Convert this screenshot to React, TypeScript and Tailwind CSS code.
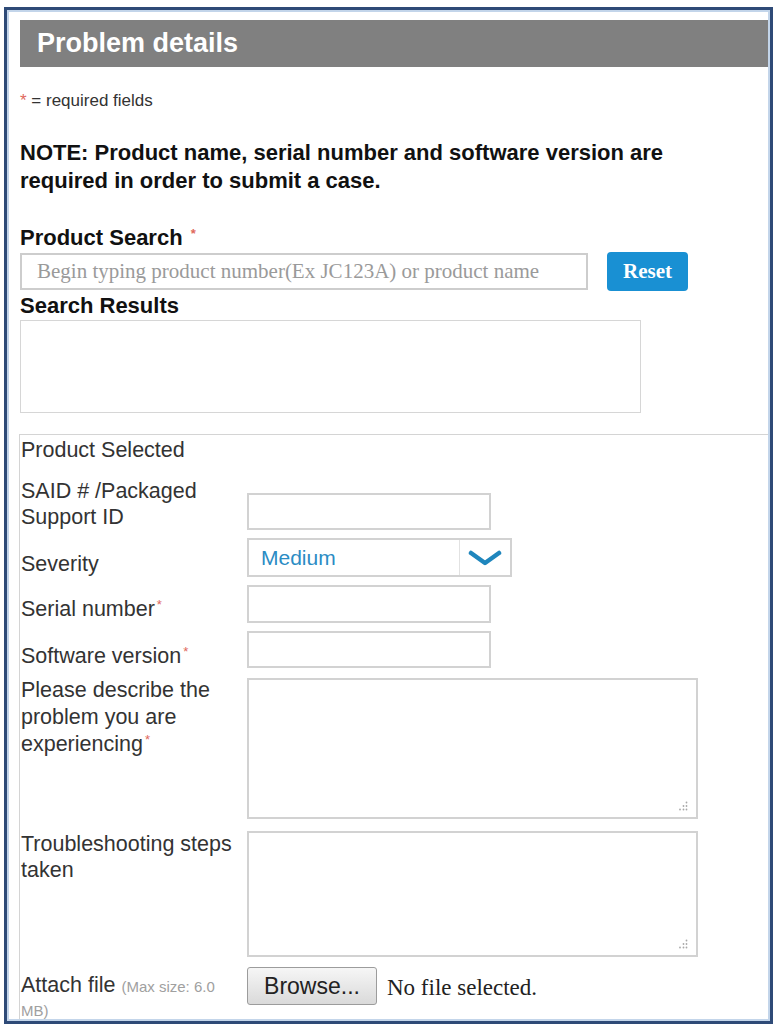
import React from "react";

const sans = "font-['Liberation_Sans',Arial,sans-serif]";
const serif = "font-['Liberation_Serif','Times_New_Roman',serif]";

function Req() {
  return <span className="inline-block relative -top-[7px] text-[#e0685c] text-[13px] leading-none ml-[2px]">*</span>;
}

function Grip() {
  return (
    <svg width="10" height="10" viewBox="0 0 10 10" className="absolute right-[8px] bottom-[6px]">
      <g fill="#a8a8a8">
        <circle cx="8.5" cy="1.5" r="0.9" />
        <circle cx="5.5" cy="5" r="0.9" />
        <circle cx="8.5" cy="5" r="0.9" />
        <circle cx="2" cy="8.5" r="0.9" />
        <circle cx="5.5" cy="8.5" r="0.9" />
        <circle cx="8.5" cy="8.5" r="0.9" />
      </g>
    </svg>
  );
}

function TextBox({ className = "" }: { className?: string }) {
  return <div className={`border-2 border-[#d2d2d2] bg-white ${className}`} />;
}

export default function App() {
  return (
    <div className={`min-h-[1026px] bg-white pt-[7px] pl-[4px] ${sans}`}>
      <div className="w-[769px] h-[1017px] border-[3px] border-[#2e4a77]">
        <div className="h-full border-2 border-[#c3d5ea] pt-[8px] pl-[11px] overflow-hidden">
          {/* Header */}
          <div className="h-[47px] bg-[#808080] flex items-center pl-[17px]">
            <span className="text-white font-bold text-[27px] leading-none">Problem details</span>
          </div>

          <div className="mt-[23px] text-[17px] leading-[22px] text-[#333]">
            <span className="text-[#e0685c]">*</span> = required fields
          </div>

          <p className="mt-[27px] max-w-[700px] font-bold text-[22px] leading-[28px] text-[#111]">
            NOTE: Product name, serial number and software version are required in order to submit a case.
          </p>

          {/* Product search */}
          <div className="mt-[30px] font-bold text-[22px] leading-[26px] text-[#111]">
            Product Search <Req />
          </div>
          <div className="mt-[1px] flex items-center">
            <div className="w-[568px] h-[37px] border-2 border-[#cdcdcd] flex items-center pl-[15px]">
              <span className={`${serif} text-[21px] text-[#9a9a9a]`}>
                Begin typing product number(Ex JC123A) or product name
              </span>
            </div>
            <button className={`ml-[19px] w-[81px] h-[39px] rounded-[4px] bg-[#1990d3] text-white font-bold text-[21px] ${serif}`}>
              Reset
            </button>
          </div>

          <div className="mt-[2px] font-bold text-[22px] leading-[26px] text-[#111]">Search Results</div>
          <div className="mt-[1px] w-[621px] h-[93px] border border-[#d6d6d6]" />

          {/* Product selected */}
          <div className="mt-[21px] -ml-[1px] border-l border-t border-[#d4d4d4] pl-[1px] pt-[2px] text-[21.5px] text-[#333]">
            <div className="leading-[26px]">Product Selected</div>

            <div className="mt-[15px] flex items-end">
              <div className="w-[226px] leading-[26px]">SAID # /Packaged Support ID</div>
              <TextBox className="w-[244px] h-[37px]" />
            </div>

            <div className="mt-[8px] flex items-end">
              <div className="w-[226px] leading-[26px]">Severity</div>
              <div className="w-[265px] h-[39px] border-2 border-[#d2d2d2] flex">
                <div className="flex-1 flex items-center pl-[12px] text-[21px] text-[#2b8cc4]">Medium</div>
                <div className="w-[51px] border-l border-[#e2e2e2] flex items-center justify-center">
                  <svg width="34" height="18" viewBox="0 0 34 18">
                    <polyline
                      points="3,4 17,14 31,4"
                      fill="none"
                      stroke="#1f86bd"
                      strokeWidth="4.5"
                      strokeLinecap="round"
                      strokeLinejoin="round"
                    />
                  </svg>
                </div>
              </div>
            </div>

            <div className="mt-[8px] flex items-end">
              <div className="w-[226px] leading-[26px] mb-[1px]">
                Serial number<Req />
              </div>
              <TextBox className="w-[244px] h-[38px]" />
            </div>

            <div className="mt-[8px] flex items-end">
              <div className="w-[226px] leading-[26px] -mb-[1px]">
                Software version<Req />
              </div>
              <TextBox className="w-[244px] h-[37px]" />
            </div>

            <div className="mt-[10px] flex items-start">
              <div className="w-[226px] leading-[27px] -mt-[1px]">
                Please describe the problem you are experiencing<Req />
              </div>
              <div className="relative w-[451px] h-[141px] border-2 border-[#d2d2d2]">
                <Grip />
              </div>
            </div>

            <div className="mt-[12px] flex items-start">
              <div className="w-[226px] leading-[26px]">Troubleshooting steps taken</div>
              <div className="relative w-[451px] h-[126px] border-2 border-[#d2d2d2]">
                <Grip />
              </div>
            </div>

            <div className="mt-[10px] flex items-start">
              <div className="w-[226px] pr-[10px] pt-[6px] leading-[24px]">
                Attach file <span className="text-[15px] leading-[18px] text-[#a0a0a0]">(Max size: 6.0 MB)</span>
              </div>
              <button className="w-[130px] h-[38px] rounded-[3px] border border-[#9c9c9c] bg-gradient-to-b from-[#f6f6f6] to-[#dadada] text-[23px] text-[#222]">
                Browse...
              </button>
              <span className={`ml-[10px] mt-[4px] ${serif} text-[23px] text-[#222]`}>No file selected.</span>
            </div>
          </div>
        </div>
      </div>
    </div>
  );
}
